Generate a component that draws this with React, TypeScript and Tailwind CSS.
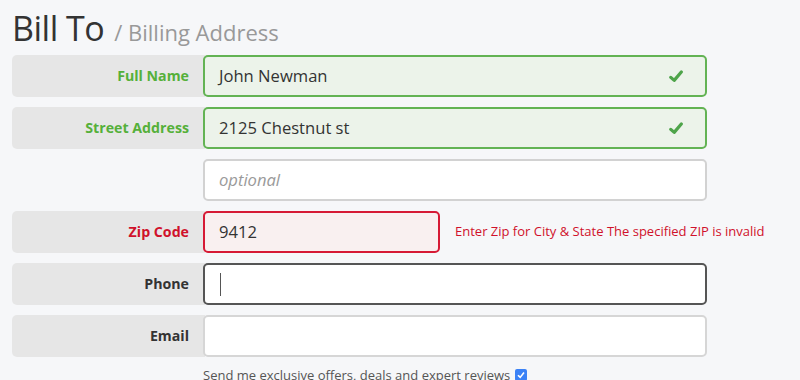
import React from "react";

const font = { fontFamily: '"Open Sans", "Liberation Sans", sans-serif' };

function Check() {
  return (
    <svg width="14" height="13" viewBox="0 0 14 13" className="shrink-0">
      <path d="M1.8 7.4 L5.2 10.4 L12.3 2" fill="none" stroke="#4ea44a" strokeWidth="3.2" strokeLinecap="round" strokeLinejoin="round" />
    </svg>
  );
}

function Label({ text, color }: { text?: string; color: string }) {
  if (!text) return <div className="w-[191px] shrink-0" />;
  return (
    <div className={`w-[193px] -mr-[2px] shrink-0 h-[42px] rounded-l-[5px] bg-[#e6e6e6] flex items-center justify-end pr-[16px] text-[14.2px] font-bold ${color}`}>
      {text}
    </div>
  );
}

export default function App() {
  return (
    <div className="w-[800px] h-[380px] overflow-hidden bg-[#f6f7f9] text-[#333]" style={font}>
      <div className="pl-[12px] pt-[8px] flex items-baseline h-[55px]">
        <span className="text-[34px] text-[#333] leading-[40px] tracking-[-0.5px]">Bill To</span>
        <span className="text-[22px] text-[#999] ml-[10px]">/ Billing Address</span>
      </div>
      <div className="pl-[12px] flex flex-col gap-[10px]">
        <div className="flex">
          <Label text="Full Name" color="text-[#55b03a]" />
          <div className="relative z-10 w-[504px] h-[42px] rounded-[5px] border-2 border-[#63b354] bg-[#ecf3ea] flex items-center pl-[14px] pr-[22px] text-[16.6px] text-[#333]">
            <span className="flex-1">John Newman</span>
            <Check />
          </div>
        </div>
        <div className="flex">
          <Label text="Street Address" color="text-[#55b03a]" />
          <div className="relative z-10 w-[504px] h-[42px] rounded-[5px] border-2 border-[#63b354] bg-[#ecf3ea] flex items-center pl-[14px] pr-[22px] text-[16.6px] text-[#333]">
            <span className="flex-1">2125 Chestnut st</span>
            <Check />
          </div>
        </div>
        <div className="flex">
          <Label color="" />
          <div className="w-[504px] h-[42px] rounded-[5px] border-2 border-[#d2d2d2] bg-white flex items-center pl-[14px] text-[16.6px] italic text-[#9a9a9a]">
            optional
          </div>
        </div>
        <div className="flex items-center">
          <Label text="Zip Code" color="text-[#d0112b]" />
          <div className="relative z-10 w-[237px] h-[42px] rounded-[5px] border-2 border-[#d61a35] bg-[#f9f0f0] flex items-center pl-[14px] text-[16.6px] text-[#333]">
            9412
          </div>
          <div className="ml-[15px] text-[13px] text-[#d0112b]">Enter Zip for City &amp; State The specified ZIP is invalid</div>
        </div>
        <div className="flex">
          <Label text="Phone" color="text-[#333]" />
          <div className="relative z-10 w-[504px] h-[42px] rounded-[5px] border-2 border-[#555] bg-white flex items-center pl-[15px]">
            <div className="w-[1px] h-[23px] bg-[#555]" />
          </div>
        </div>
        <div className="flex">
          <Label text="Email" color="text-[#333]" />
          <div className="relative z-10 w-[504px] h-[42px] rounded-[5px] border-2 border-[#d6d6d6] bg-white" />
        </div>
        <div className="flex items-center pl-[191px] -mt-[1px] text-[13px] text-[#555] leading-[18px]">
          <span>Send me exclusive offers, deals and expert reviews</span>
          <span className="ml-[5px] w-[12px] h-[12px] rounded-[2px] bg-[#3b82f6] flex items-center justify-center">
            <svg width="10" height="10" viewBox="0 0 10 10"><path d="M2 5.2 L4.2 7.4 L8 2.6" fill="none" stroke="white" strokeWidth="1.6" /></svg>
          </span>
        </div>
      </div>
    </div>
  );
}
